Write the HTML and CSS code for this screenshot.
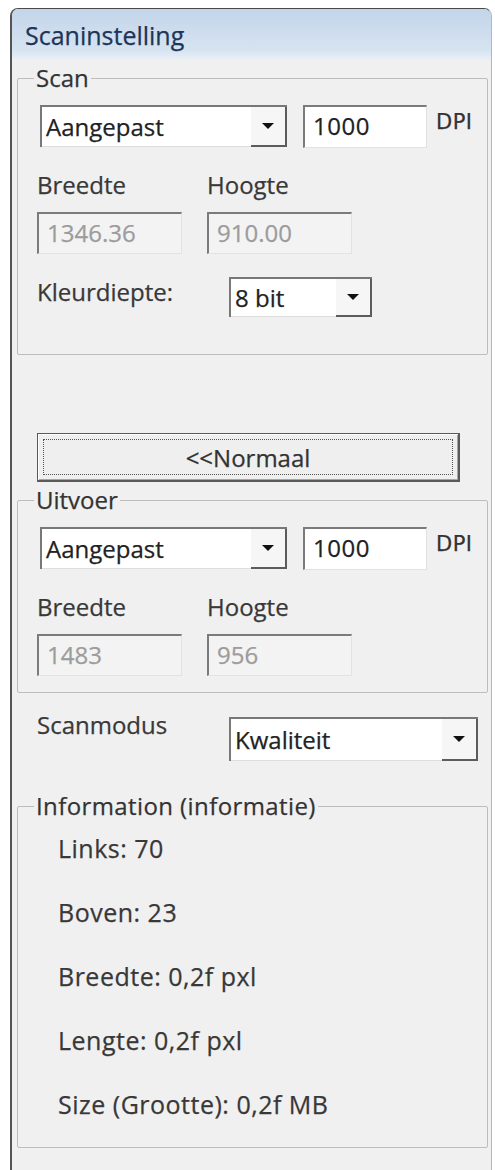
FILE: index.html
```html
<!DOCTYPE html>
<html lang="nl">
<head>
<meta charset="utf-8">
<title>Scaninstelling</title>
<link rel="stylesheet" href="styles.css">
</head>
<body>
<div class="window">
  <div class="titlebar">Scaninstelling</div>

  <fieldset class="group group-scan">
    <legend>Scan</legend>
    <div class="row row-first">
      <div class="combo combo-preset">
        <span class="val">Aangepast</span>
        <span class="drop"><svg width="12" height="7" viewBox="0 0 12 7"><polygon points="0,0 12,0 6,6" fill="#111"/></svg></span>
      </div>
      <div class="field field-dpi">1000</div>
      <span class="unit">DPI</span>
    </div>
    <div class="row row-labels">
      <span class="lbl lbl-w">Breedte</span>
      <span class="lbl">Hoogte</span>
    </div>
    <div class="row row-fields">
      <div class="field disabled field-size">1346.36</div>
      <div class="field disabled field-size">910.00</div>
    </div>
    <div class="row row-depth">
      <span class="lbl lbl-wide">Kleurdiepte:</span>
      <div class="combo combo-depth">
        <span class="val">8 bit</span>
        <span class="drop"><svg width="12" height="7" viewBox="0 0 12 7"><polygon points="0,0 12,0 6,6" fill="#111"/></svg></span>
      </div>
    </div>
  </fieldset>

  <div class="button-normal"><div class="focus">&lt;&lt;Normaal</div></div>

  <fieldset class="group group-out">
    <legend>Uitvoer</legend>
    <div class="row row-first">
      <div class="combo combo-preset">
        <span class="val">Aangepast</span>
        <span class="drop"><svg width="12" height="7" viewBox="0 0 12 7"><polygon points="0,0 12,0 6,6" fill="#111"/></svg></span>
      </div>
      <div class="field field-dpi">1000</div>
      <span class="unit">DPI</span>
    </div>
    <div class="row row-labels">
      <span class="lbl lbl-w">Breedte</span>
      <span class="lbl">Hoogte</span>
    </div>
    <div class="row row-fields">
      <div class="field disabled field-size">1483</div>
      <div class="field disabled field-size">956</div>
    </div>
  </fieldset>

  <div class="row row-mode">
    <span class="lbl lbl-wide">Scanmodus</span>
    <div class="combo combo-mode">
      <span class="val">Kwaliteit</span>
      <span class="drop"><svg width="12" height="7" viewBox="0 0 12 7"><polygon points="0,0 12,0 6,6" fill="#111"/></svg></span>
    </div>
  </div>

  <fieldset class="group group-info">
    <legend>Information (informatie)</legend>
    <div class="info-list">
      <div class="info">Links: 70</div>
      <div class="info">Boven: 23</div>
      <div class="info">Breedte: 0,2f pxl</div>
      <div class="info">Lengte: 0,2f pxl</div>
      <div class="info">Size (Grootte): 0,2f MB</div>
    </div>
  </fieldset>
</div>
</body>
</html>
```

FILE: styles.css
```css
body {
  margin: 0;
  background: #ffffff;
  font-family: "Open Sans", "Noto Sans", sans-serif;
  color: #333333;
  -webkit-text-stroke: 0.25px;
}

.window {
  box-sizing: border-box;
  width: 482px;
  height: 1162px;
  margin: 8px 0 0 10px;
  border-top: 1px solid #4a4a4a;
  border-left: 2px solid #555555;
  border-right: 1px solid #a9b8ca;
  border-radius: 8px 8px 0 0;
  background: #f0f0f0;
  overflow: hidden;
}

.titlebar {
  box-sizing: border-box;
  height: 51px;
  padding: 4px 0 0 13px;
  font-size: 25px;
  line-height: 45px;
  color: #1d3556;
  background: linear-gradient(#c3d5ea, #d6e3f1 80%, #eaf0f7);
}

.group {
  margin: 6px 3px 0 5px;
  padding: 0;
  border: 1px solid #bdbdbd;
  border-radius: 2px;
  min-width: 0;
}

.group legend {
  margin-left: 16px;
  padding: 0 2px;
  font-size: 24px;
  line-height: 24px;
  color: #333333;
}

.group-scan { padding-bottom: 37px; }
.group-out { margin-top: 6px; padding-bottom: 16px; }
.group-info { margin-top: 33px; }
.group-info legend { letter-spacing: 0.4px; }

.row {
  display: flex;
  align-items: flex-start;
}

.row-first { margin: 15px 0 0 22px; }
.row-labels { margin: 25px 0 0 19px; }
.row-fields { margin: 15px 0 0 19px; gap: 25px; }
.row-depth { margin: 23px 0 0 19px; }
.row-mode { margin: 20px 0 0 25px; }

.lbl {
  font-size: 24px;
  line-height: 24px;
  color: #383838;
}
.lbl-w { width: 170px; }
.lbl-wide { width: 192px; }
.row-depth .lbl { margin-top: 3px; }

.combo {
  box-sizing: border-box;
  display: flex;
  background: #ffffff;
  border-top: 2px solid #787878;
  border-left: 2px solid #787878;
}
.combo .val {
  flex: 1;
  display: flex;
  align-items: center;
  padding-left: 4px;
  font-size: 24px;
  color: #222222;
  border-bottom: 1px solid #dedede;
}
.combo .drop {
  width: 34px;
  display: flex;
  align-items: center;
  justify-content: center;
  background: #f6f6f6;
  border-right: 2px solid #5c5c5c;
  border-bottom: 2px solid #5c5c5c;
}

.combo-preset { width: 247px; height: 42px; }
.combo-depth { width: 143px; height: 40px; }
.combo-mode { width: 249px; height: 44px; margin-top: 4px; }

.field {
  box-sizing: border-box;
  height: 42px;
  padding-left: 8px;
  background: #ffffff;
  border-top: 2px solid #7b7b7b;
  border-left: 2px solid #7b7b7b;
  border-right: 1px solid #e2e2e2;
  border-bottom: 1px solid #e2e2e2;
  font-size: 24px;
  line-height: 38px;
  color: #222222;
}
.field-dpi { width: 124px; height: 43px; margin-left: 16px; letter-spacing: 0.5px; }
.field-size { width: 145px; }
.field.disabled {
  background: #f3f3f3;
  color: #9c9c9c;
}

.unit {
  margin: 5px 0 0 9px;
  font-family: "DejaVu Sans", sans-serif;
  font-size: 21px;
  line-height: 24px;
  letter-spacing: 0.5px;
  color: #333333;
}

.button-normal {
  box-sizing: border-box;
  width: 423px;
  height: 49px;
  margin: 78px 0 0 25px;
  padding: 5px;
  background: #efefef;
  border: 1px solid #5a5a5a;
  border-right-width: 2px;
  border-bottom-width: 2px;
  box-shadow: inset 1px 1px #ffffff, inset -1px -1px #a5a5a5;
}
.button-normal .focus {
  box-sizing: border-box;
  height: 100%;
  display: flex;
  align-items: center;
  justify-content: center;
  border: 1px dotted #555555;
  font-size: 24px;
  color: #333333;
}

.info-list {
  display: flex;
  flex-direction: column;
  gap: 39px;
  padding: 18px 0 30px 40px;
}
.info {
  font-size: 25px;
  line-height: 25px;
  letter-spacing: 0.5px;
  color: #383838;
}
```
